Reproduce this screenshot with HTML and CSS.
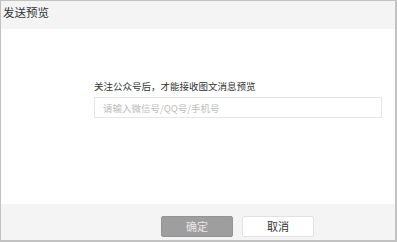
FILE: index.html
```html
<!DOCTYPE html>
<html lang="zh-CN">
<head>
<meta charset="utf-8">
<link rel="stylesheet" href="styles.css">
</head>
<body>
<div class="dialog">
  <div class="dialog-header">发送预览</div>
  <div class="dialog-body">
    <p class="hint">关注公众号后，才能接收图文消息预览</p>
    <input class="account-input" type="text" placeholder="请输入微信号/QQ号/手机号">
  </div>
  <div class="dialog-footer">
    <button class="btn btn-primary">确定</button>
    <button class="btn btn-default">取消</button>
  </div>
</div>
</body>
</html>
```

FILE: styles.css
```css
* { box-sizing: border-box; }
html, body { margin: 0; padding: 0; background: #fff; }
body { font-family: "Noto Sans CJK SC", "Noto Sans", sans-serif; }
.dialog {
  width: 397px;
  height: 242px;
  border-style: solid;
  border-color: #c2c2c2;
  border-width: 1px 2px 2px 1px;
  display: flex;
  flex-direction: column;
  background: #fff;
}
.dialog-header {
  height: 28px;
  line-height: 22px;
  padding-left: 2px;
  background: #f4f4f4;
  font-size: 11.5px;
  color: #333;
}
.dialog-body {
  flex: 1;
  padding: 50px 13px 0 93px;
  display: flex;
  flex-direction: column;
}
.hint {
  margin: 0 0 4px;
  font-size: 9.5px;
  line-height: 14px;
  color: #333;
}
.account-input {
  width: 288px;
  height: 21px;
  border: 1px solid #e6e6e6;
  padding: 0 8px;
  font-family: inherit;
  font-size: 9.5px;
  color: #333;
  outline: none;
}
.account-input::placeholder { color: #bcbcbc; }
.dialog-footer {
  height: 36px;
  background: #f4f4f4;
  padding: 12px 0 0 160px;
  display: flex;
  align-items: flex-start;
  gap: 9px;
}
.btn {
  width: 72px;
  height: 21px;
  font-family: inherit;
  font-size: 11px;
  line-height: 19px;
  padding: 0;
  border-radius: 2px;
  cursor: pointer;
}
.btn-primary {
  background: #9e9e9e;
  border: 1px solid #949494;
  color: #e8e8e8;
}
.btn-default {
  background: #fff;
  border: 1px solid #e2e2e2;
  color: #333;
}
```
